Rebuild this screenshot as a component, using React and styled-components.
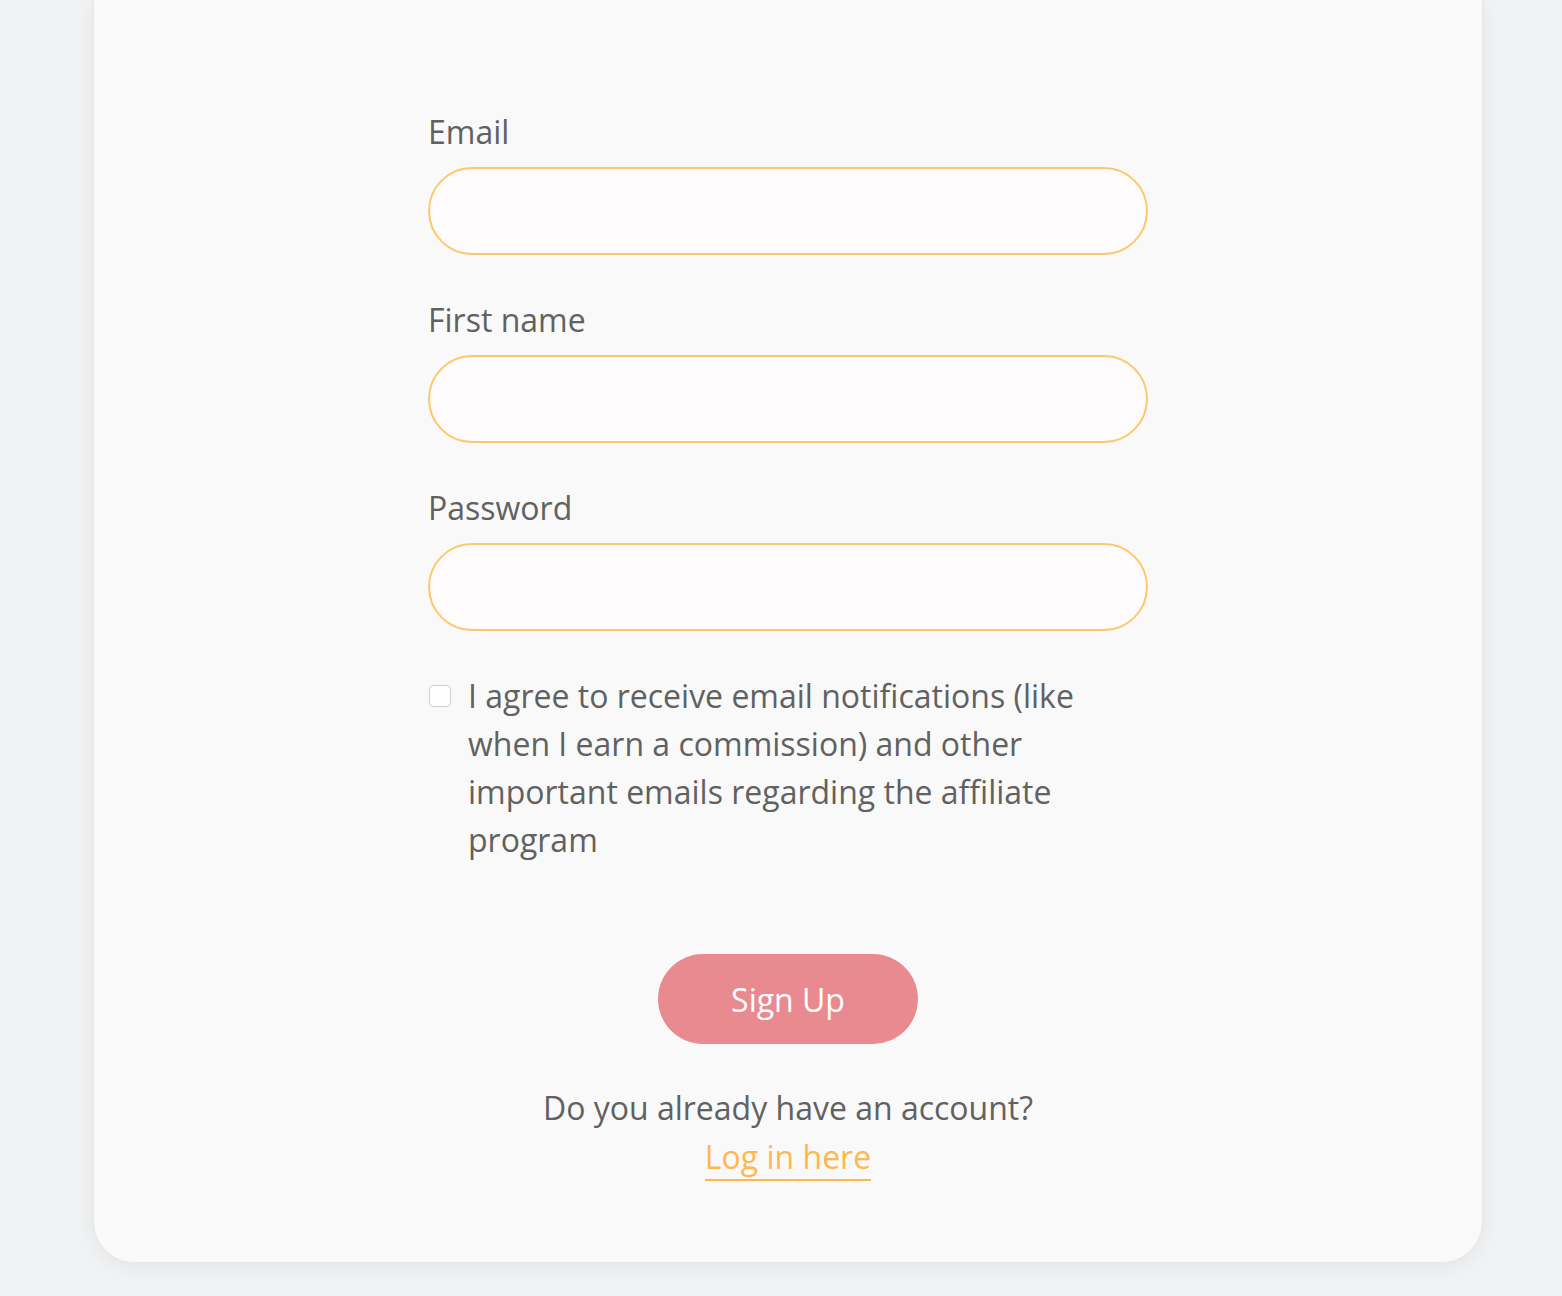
import React from 'react';
import styled, { createGlobalStyle } from 'styled-components';

const GlobalStyle = createGlobalStyle`
  html, body {
    margin: 0;
    padding: 0;
    background: #f0f2f4;
    font-family: 'Open Sans', 'Liberation Sans', sans-serif;
  }
`

const Page = styled.div`
  min-height: 1296px;
  padding: 0 80px 0 94px;
  box-sizing: border-box;
`

const Card = styled.div`
  background: #f9f9f9;
  border-radius: 0 0 40px 40px;
  box-shadow: 0 0 0 2px #e9e9e9, 0 4px 24px rgba(0, 0, 0, 0.06);
  padding: 108px 0 81px;
  display: flex;
  justify-content: center;
`

const Form = styled.form`
  width: 720px;
  display: flex;
  flex-direction: column;
`

const Field = styled.div`
  display: flex;
  flex-direction: column;
  margin-bottom: 41px;
`

const Label = styled.label`
  font-size: 32px;
  line-height: 48px;
  color: #616161;
  margin-bottom: 11px;
`

const Input = styled.input`
  height: 88px;
  box-sizing: border-box;
  border: 2px solid #ffc76b;
  border-radius: 44px;
  background: #fdfbfb;
  padding: 0 40px;
  font-size: 32px;
  font-family: inherit;
  outline: none;
`

const CheckRow = styled.label`
  display: flex;
  align-items: flex-start;
  gap: 17px;
  font-size: 32px;
  line-height: 48px;
  color: #616161;
  padding-right: 50px;
`

const Box = styled.span`
  flex: none;
  width: 22px;
  height: 22px;
  box-sizing: border-box;
  margin-top: 13px;
  margin-left: 1px;
  border: 1.5px solid #cfcfcf;
  border-radius: 5px;
  background: #ffffff;
`

const Actions = styled.div`
  display: flex;
  flex-direction: column;
  align-items: center;
  margin-top: 90px;
`

const Button = styled.button`
  width: 260px;
  height: 90px;
  border: none;
  border-radius: 45px;
  background: #e98a91;
  color: #ffffff;
  font-family: inherit;
  font-size: 32px;
  cursor: pointer;
`

const Question = styled.p`
  margin: 40px 0 0;
  font-size: 32px;
  line-height: 48px;
  color: #616161;
  text-align: center;
`

const LoginLink = styled.a`
  font-size: 32px;
  color: #ffb84d;
  text-decoration: none;
  border-bottom: 2px solid #ffb84d;
  line-height: 44px;
  margin-top: 3px;
`

const fields = ['Email', 'First name', 'Password']

export default function App() {
  return (
    <>
      <GlobalStyle />
      <Page>
        <Card>
          <Form onSubmit={e => e.preventDefault()}>
            {fields.map(f => (
              <Field key={f}>
                <Label>{f}</Label>
                <Input type={f === 'Password' ? 'password' : 'text'} />
              </Field>
            ))}
            <CheckRow>
              <Box />
              <span>I agree to receive email notifications (like when I earn a commission) and other important emails regarding the affiliate program</span>
            </CheckRow>
            <Actions>
              <Button type="submit">Sign Up</Button>
              <Question>Do you already have an account?</Question>
              <LoginLink href="#">Log in here</LoginLink>
            </Actions>
          </Form>
        </Card>
      </Page>
    </>
  )
}
